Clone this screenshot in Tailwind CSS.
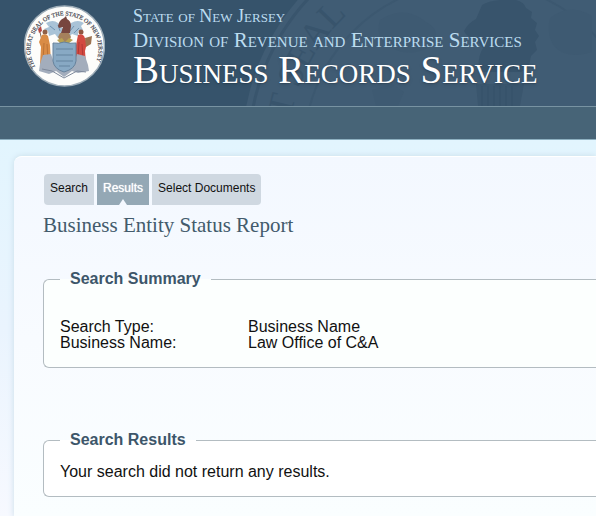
<!DOCTYPE html>
<html lang="en">
<head>
<meta charset="utf-8">
<title>Business Records Service</title>
<script src="https://cdn.jsdelivr.net/npm/@tailwindcss/browser@4"></script>
</head>
<body class="min-h-screen flex flex-col overflow-x-hidden bg-[#f6faff] font-['Liberation_Sans',Arial,sans-serif] text-base text-[#111]">
<header class="relative h-[106px] overflow-hidden bg-[#36536b]">
  <!-- Faint state seal behind the titles -->
  <svg class="absolute left-[240px] top-0" width="464" height="106" viewBox="240 0 464 106" aria-hidden="true">
    <defs><path id="big" d="M288 150A184 184 0 0 1 656 150"/></defs>
    <circle cx="472" cy="150" r="230" fill="#405c74"/>
    <circle cx="472" cy="150" r="223" fill="none" stroke="#39556d" stroke-width="3"/>
    <circle cx="472" cy="150" r="168" fill="none" stroke="#3c5870" stroke-width="2"/>
    <text font-family="Liberation Serif" font-size="36" fill="#38546c"><textPath href="#big" startOffset="32">T SEAL</textPath></text>
    <path d="M464 31q4-8 12-12l6-14q6-4 18-5h16q8 2 10 8l6 4l-1 6l6 5l-2 7l4 6l-4 6l2 8l-6 6l-2 10l-8 6h-42q-2-14 4-24l-6-8q-10-2-13-9z" fill="#38546c"/>
    <path d="M476 84h48l-4 22h-42z" fill="#3a566e"/>
    <path d="M482 86v20m6-20v20m6-20v20m6-20v20m6-20v20m6-20v20" stroke="#345068" stroke-width="1"/>
    <path d="M380 20q24-16 46 2q16 8 6 24q-22 12-40 2q-18-8-12-28zM550 18q20-16 42-2v36q-26 8-38-6q-8-12-4-28zM372 90l20-6 12 8-6 14h-22z" fill="#3e5a72"/>
  </svg>
  <div class="relative flex items-start gap-7 pl-6 pt-1">
    <svg class="shrink-0" width="81" height="84" viewBox="0 0 81 84" role="img" aria-label="The Great Seal of the State of New Jersey">
      <defs><path id="ring" d="M12 64A34 34 0 1 1 69 64"/></defs>
      <circle cx="40.500" cy="42" r="40" fill="#fdfdfb" stroke="#9eadb8" stroke-width="1.500"/>
      <text font-family="Liberation Serif" font-size="6" fill="#4a4b54" stroke="#4a4b54" stroke-width=".2"><textPath href="#ring" startOffset="1">THE GREAT SEAL OF THE STATE OF NEW JERSEY</textPath></text>
      <!-- mantling -->
      <path d="M22 19q7-4 12 0l4 5h6l3-5q7-4 13 0l-3 3 2 4-5 1v5l-6-2-4 4H34l-3-4-6 2-1-5-4-2 5-2z" fill="#a9c3d7"/>
      <path d="M26 22l5 4m3-5l2 6m14-5l-4 5m9-3l-5 5" stroke="#6f93b2" stroke-width="1"/>
      <!-- horse head -->
      <path d="M34 22q1-6 6-8l2-2 1 3q4 2 4 7l-1 7h-9l2-6-4 1z" fill="#77463f"/>
      <!-- helmet -->
      <path d="M36 29h9l2 4-3 6h-7l-3-6z" fill="#a5805c"/>
      <path d="M33 36l5-2 3 4 4-4 4 2-4 3h-9z" fill="#b8a253"/>
      <!-- Liberty -->
      <path d="M14 25l3-3 1 5-3 2z" fill="#b54a45"/>
      <path d="M16 28l2 9" stroke="#87654d" stroke-width="1"/>
      <circle cx="21" cy="28" r="2.500" fill="#8e6047"/>
      <path d="M18 31q4-2 6 1l2 9 1 19H16l1-17-2-5z" fill="#d98c46"/>
      <path d="M20 39l-1 19m4-18l1 18" stroke="#b46b31" stroke-width=".8"/>
      <!-- Ceres -->
      <circle cx="57" cy="28" r="2.500" fill="#8e5540"/>
      <path d="M54 31q4-2 6 1l3 7-2 8 1 13H52l-1-14z" fill="#d34a41"/>
      <path d="M55 38l-1 16m4-14l1 15" stroke="#a93432" stroke-width=".8"/>
      <path d="M61 34l7-2-1 8-5 3z" fill="#9d7350"/>
      <!-- base -->
      <path d="M16 60l3-9 8-1 3 9 10 8 10-8 3-9 8 2 3 9 1 6-11 2-6-2-8 6-8-6-7 3-10-3z" fill="#a3adbc"/>
      <path d="M18 65l10 2 12 7 13-7 9 1" fill="none" stroke="#7e899b" stroke-width="1"/>
      <!-- shield -->
      <path d="M29 39q6 1 11-1q6 2 12 1v18q-1 8-12 11q-10-3-11-11z" fill="#88a9c4" stroke="#66829c" stroke-width="1"/>
      <path d="M32 45h17M32 51h17M32 57h17M35 62h11" stroke="#65849f" stroke-width="1"/>
    </svg>
    <div class="[font-variant:small-caps] font-['Liberation_Serif',serif] whitespace-nowrap text-[#bcdcf0]">
      <p class="text-lg leading-6">State of New Jersey</p>
      <p class="text-[21px] leading-6">Division of Revenue and Enterprise Services</p>
      <h1 class="text-[39px] leading-9 text-white text-shadow-md">Business Records Service</h1>
    </div>
  </div>
</header>
<nav class="h-[34px] shrink-0 border-y border-t-[#7893a2] border-b-[#8db0c0] bg-[#476477]" aria-label="Main"></nav>
<main class="grow flex flex-col bg-linear-to-b from-[#e2f5fe] via-[#eaf4fe] to-[#f7f9ff] pt-4 pl-3.5">
  <div class="grow rounded-tl-lg border-t border-white bg-linear-to-b from-[#f3f8ff] via-[#f8fbff] to-[#fafeff] shadow-[0_0_6px_#c8dce8] pt-[17px] pl-[29px]">
    <div class="flex gap-[3px] pl-px text-xs leading-7 text-[#111]" role="navigation" aria-label="Steps">
      <a href="#" class="rounded-l-[4px] bg-[#cfd8e1] px-1.5 pb-[3px]">Search</a>
      <a href="#" aria-current="page" class="relative bg-[#94a8b5] px-1.5 pb-[3px] text-white text-shadow-[0_0_1px_#fff]">Results<span class="absolute bottom-0 left-1/2 -translate-x-1/2 border-x-4 border-b-[6px] border-x-transparent border-b-[#f4f8ff]"></span></a>
      <a href="#" class="rounded-r-[4px] bg-[#cfd8e1] px-1.5 pb-[3px]">Select Documents</a>
    </div>
    <h2 class="mt-2 font-['Liberation_Serif',serif] text-[21px] leading-6 text-[#435b6c]">Business Entity Status Report</h2>
    <fieldset class="mt-8 rounded-l-md border border-r-0 border-[#b3bcc1] bg-[#fcfffe] pl-4 pb-4">
      <legend class="px-2.5 font-bold leading-5 text-[#3d566a]">Search Summary</legend>
      <dl class="mt-[30px] grid grid-cols-[188px_1fr] leading-4">
        <dt>Search Type:</dt><dd>Business Name</dd>
        <dt>Business Name:</dt><dd>Law Office of C&amp;A</dd>
      </dl>
    </fieldset>
    <fieldset class="mt-[62px] mb-5 rounded-l-md border border-r-0 border-[#b3bcc1] bg-white pl-4 pb-4">
      <legend class="px-2.5 font-bold leading-5 text-[#3d566a]">Search Results</legend>
      <p class="mt-3.5 leading-4">Your search did not return any results.</p>
    </fieldset>
  </div>
</main>
</body>
</html>
